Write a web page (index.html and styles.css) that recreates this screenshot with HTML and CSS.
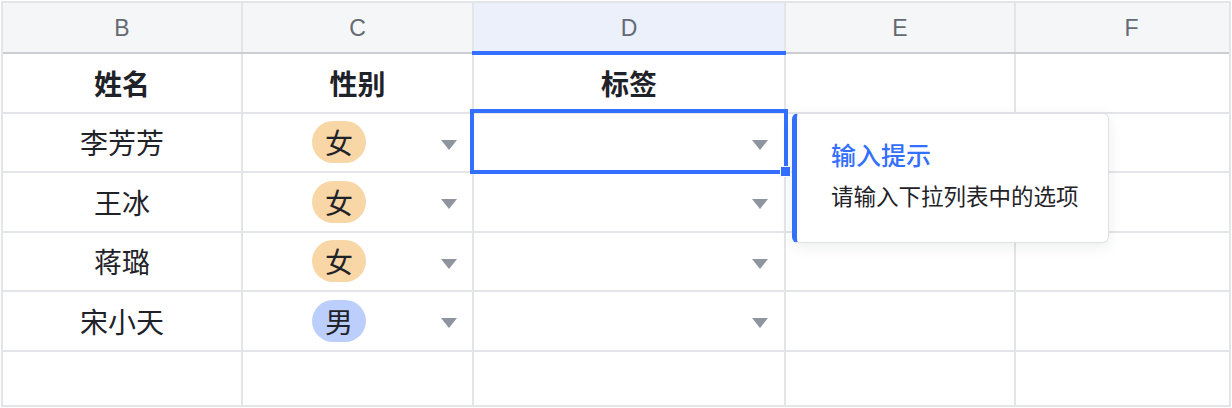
FILE: index.html
```html
<!DOCTYPE html>
<html lang="zh-CN">
<head>
<meta charset="utf-8">
<title>Sheet</title>
<link rel="stylesheet" href="styles.css">
</head>
<body>
<div class="sheet">
  <div class="head">
    <div class="hc">B</div>
    <div class="hc">C</div>
    <div class="hc active">D</div>
    <div class="hc">E</div>
    <div class="hc clipped">F</div>
  </div>
  <div class="grid">
    <div class="cell title">姓名</div>
    <div class="cell title">性别</div>
    <div class="cell title">标签</div>
    <div class="cell"></div>
    <div class="cell"></div>

    <div class="cell">李芳芳</div>
    <div class="cell drop c"><span class="val"><span class="pill f">女</span></span><span class="arrow"></span></div>
    <div class="cell drop d selected"><span class="val"></span><span class="arrow"></span><div class="sel"><i class="handle"></i></div></div>
    <div class="cell"></div>
    <div class="cell"></div>

    <div class="cell">王冰</div>
    <div class="cell drop c"><span class="val"><span class="pill f">女</span></span><span class="arrow"></span></div>
    <div class="cell drop d"><span class="val"></span><span class="arrow"></span></div>
    <div class="cell"></div>
    <div class="cell"></div>

    <div class="cell">蒋璐</div>
    <div class="cell drop c"><span class="val"><span class="pill f">女</span></span><span class="arrow"></span></div>
    <div class="cell drop d"><span class="val"></span><span class="arrow"></span></div>
    <div class="cell"></div>
    <div class="cell"></div>

    <div class="cell">宋小天</div>
    <div class="cell drop c"><span class="val"><span class="pill m">男</span></span><span class="arrow"></span></div>
    <div class="cell drop d"><span class="val"></span><span class="arrow"></span></div>
    <div class="cell"></div>
    <div class="cell"></div>

    <div class="cell"></div>
    <div class="cell"></div>
    <div class="cell"></div>
    <div class="cell"></div>
    <div class="cell"></div>
  </div>
  <div class="tip">
    <div class="tip-title">输入提示</div>
    <div class="tip-text">请输入下拉列表中的选项</div>
  </div>
</div>
</body>
</html>
```

FILE: styles.css
```css
html, body {
  margin: 0;
  padding: 0;
  background: #ffffff;
}

body {
  font-family: "Noto Sans CJK SC", "Noto Sans", sans-serif;
  color: #1f2329;
}

.sheet {
  position: relative;
  box-sizing: border-box;
  width: 1230px;
  margin: 1px 0 0 1px;
  border: 2px solid #e3e5e8;
  background: #e3e5e8;
}

.head,
.grid {
  display: grid;
  grid-template-columns: 238px 229px 310px 228px 213px;
  column-gap: 2px;
}

.head {
  height: 49px;
  border-bottom: 2px solid #cbcdd1;
}

.grid {
  grid-template-rows: repeat(5, 57.5px) 53.5px;
  row-gap: 2px;
}

.hc {
  display: flex;
  align-items: center;
  justify-content: center;
  background: #f5f6f7;
  font-family: "Liberation Sans", Arial, sans-serif;
  font-size: 23px;
  color: #646a73;
  padding-top: 2px;
}

.hc.clipped {
  padding-left: 18px;
}

.hc.active {
  position: relative;
  background: #ebf0fb;
}

.hc.active::after {
  content: "";
  position: absolute;
  left: -2px;
  right: -2px;
  bottom: -3px;
  height: 4px;
  background: #3370ff;
}

.cell {
  display: flex;
  align-items: center;
  justify-content: center;
  background: #ffffff;
  font-size: 28px;
  line-height: 1;
}

.cell.title {
  font-weight: 700;
}

.cell.drop {
  justify-content: flex-start;
}

.val {
  flex: 1;
  display: flex;
  justify-content: center;
  align-items: center;
}

.pill {
  display: inline-block;
  height: 42px;
  line-height: 42px;
  padding: 0 13px;
  border-radius: 21px;
  font-size: 28px;
  color: #1f2329;
}

.pill.f {
  background: #f9d6a5;
}

.pill.m {
  background: #bccefc;
}

.arrow {
  width: 0;
  height: 0;
  border-left: 8px solid transparent;
  border-right: 8px solid transparent;
  border-top: 10px solid #8f959e;
  margin-top: 5px;
}

.cell.c .arrow {
  margin-left: 6px;
  margin-right: 15px;
}

.cell.d .arrow {
  margin-right: 16px;
}

.selected {
  position: relative;
}

.sel {
  position: absolute;
  top: -5px;
  left: -4px;
  right: -4px;
  bottom: -3px;
  border: 4px solid #3370ff;
  z-index: 2;
}

.handle {
  position: absolute;
  right: -7px;
  bottom: -7px;
  width: 9px;
  height: 9px;
  background: #3370ff;
  border: 1px solid #ffffff;
  border-radius: 1px;
}

.tip {
  position: absolute;
  left: 789px;
  top: 110px;
  box-sizing: border-box;
  width: 317px;
  height: 130px;
  padding: 22px 0 0 34px;
  background: #ffffff;
  border: 1px solid #dee0e3;
  border-left: 5px solid #3370ff;
  border-radius: 6px;
  box-shadow: 0 4px 14px rgba(31, 35, 41, 0.08);
  z-index: 3;
}

.tip-title {
  font-size: 25px;
  line-height: 36px;
  font-weight: 500;
  color: #3370ff;
}

.tip-text {
  margin-top: 6px;
  font-size: 22.5px;
  line-height: 34px;
  color: #1f2329;
}
```
